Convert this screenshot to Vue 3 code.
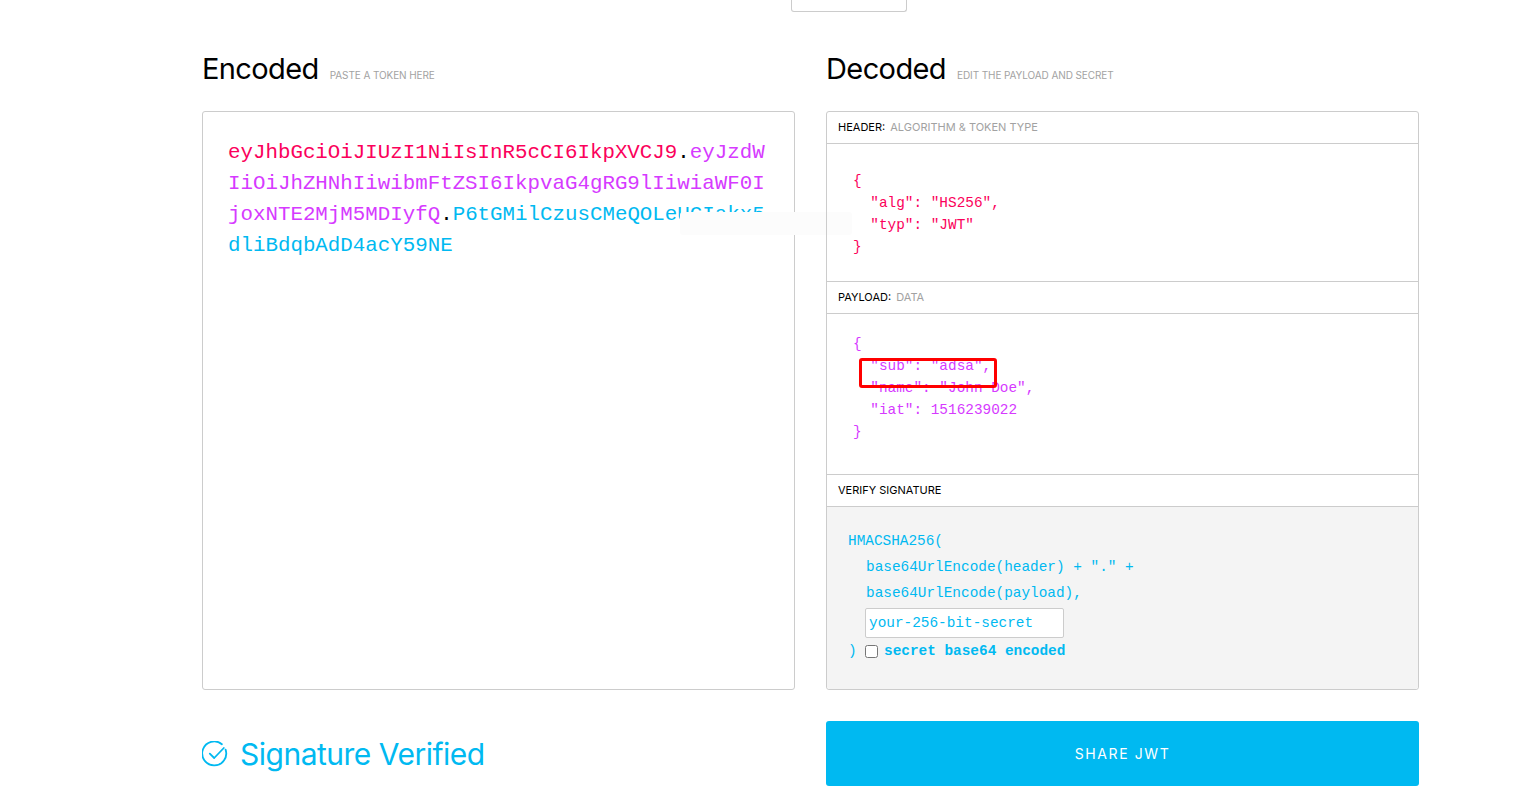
<script setup>
const headerLines = ['{', '  "alg": "HS256",', '  "typ": "JWT"', '}']
const payloadLines = ['{', '  "sub": "adsa",', '  "name": "John Doe",', '  "iat": 1516239022', '}']
</script>

<template>
  <div class="page">
    <div class="stub"></div>
    <main class="grid">
      <div class="title-row">
        <h2>Encoded</h2>
        <span>PASTE A TOKEN HERE</span>
      </div>
      <div class="title-row">
        <h2>Decoded</h2>
        <span>EDIT THE PAYLOAD AND SECRET</span>
      </div>

      <section class="panel encoded">
        <span class="red">eyJhbGciOiJIUzI1NiIsInR5cCI6IkpXVCJ9</span><span class="dot">.</span><span class="purple">eyJzdWIiOiJhZHNhIiwibmFtZSI6IkpvaG4gRG9lIiwiaWF0IjoxNTE2MjM5MDIyfQ</span><span class="dot">.</span><span class="blue">P6tGMilCzusCMeQOLeUCIakx5dliBdqbAdD4acY59NE</span>
        <div class="tip"></div>
      </section>

      <section class="panel decoded">
        <div class="head"><b>HEADER:</b> <i>ALGORITHM &amp; TOKEN TYPE</i></div>
        <pre class="code code-header red">{{ headerLines.join('\n') }}</pre>
        <div class="head ruled"><b>PAYLOAD:</b> <i>DATA</i></div>
        <div class="payload-wrap">
          <pre class="code code-payload purple">{{ payloadLines.join('\n') }}</pre>
          <div class="mark"></div>
        </div>
        <div class="head ruled"><b>VERIFY SIGNATURE</b></div>
        <div class="verify blue">
          <div class="v-first">HMACSHA256(</div>
          <div class="v-line">base64UrlEncode(header) + "." +</div>
          <div class="v-line">base64UrlEncode(payload),</div>
          <div class="v-input"><input value="your-256-bit-secret" /></div>
          <div class="v-last">
            <span>)</span>
            <input type="checkbox" />
            <strong>secret base64 encoded</strong>
          </div>
        </div>
      </section>

      <div class="verified">
        <svg width="26" height="26" viewBox="0 0 26 26" fill="none" stroke="currentColor" stroke-width="1.8" stroke-linecap="round" stroke-linejoin="round">
          <path d="M23.6 8.6A12 12 0 1 1 19.9 3.2" />
          <path d="M7.8 12.6l4.4 4.4 9.6-10" />
        </svg>
        <span>Signature Verified</span>
      </div>
      <button class="share">SHARE JWT</button>
    </main>
  </div>
</template>

<style>
html, body { margin: 0; background: #fff; overflow: hidden; }
</style>

<style scoped>
.page {
  height: 811px;
  overflow: hidden;
  font-family: Inter, "Liberation Sans", sans-serif;
  background: #fff;
}
.stub {
  width: 114px;
  height: 11px;
  margin-left: 791px;
  border: 1px solid #ccc;
  border-top: 0;
  border-radius: 0 0 3px 3px;
}
.grid {
  display: grid;
  grid-template-columns: 593px 593px;
  grid-template-rows: 99px 579px 96px;
  column-gap: 31px;
  margin-left: 202px;
}
.title-row {
  display: flex;
  align-items: baseline;
  gap: 11px;
  padding-top: 38px;
}
.title-row h2 {
  margin: 0;
  font-size: 29px;
  line-height: 38px;
  font-weight: 400;
  letter-spacing: -0.6px;
  color: #000;
}
.title-row span {
  font-size: 10px;
  color: #a2a2a2;
  letter-spacing: -0.1px;
}
.panel {
  box-sizing: border-box;
  border: 1px solid #ccc;
  border-radius: 3px;
  position: relative;
}
.encoded {
  padding: 25px 25px;
  font-family: "Liberation Mono", monospace;
  font-size: 20.8px;
  line-height: 31px;
  word-break: break-all;
}
.red { color: #fb015b; }
.purple { color: #d63aff; }
.blue { color: #00b9f1; }
.dot { color: #000; }
.tip {
  position: absolute;
  left: 477px;
  top: 100px;
  width: 172px;
  height: 23px;
  background: #fcfcfc;
  border-radius: 3px;
}
.decoded {
  display: flex;
  flex-direction: column;
}
.head {
  box-sizing: border-box;
  height: 32px;
  line-height: 31px;
  padding-left: 11px;
  font-size: 11px;
  border-bottom: 1px solid #ccc;
  flex: none;
}
.head.ruled {
  height: 33px;
  border-top: 1px solid #ccc;
}
.head b { font-weight: 400; color: #000; margin-right: 2px; }
.head i { font-style: normal; color: #a2a2a2; }
.code {
  margin: 0;
  font-family: "Liberation Mono", monospace;
  font-size: 14.4px;
  line-height: 22px;
  padding-left: 26px;
}
.code-header { height: 137px; padding-top: 26px; box-sizing: border-box; }
.payload-wrap { position: relative; height: 160px; flex: none; }
.code-payload { padding-top: 19px; }
.mark {
  position: absolute;
  left: 32px;
  top: 44px;
  width: 132px;
  height: 24px;
  border: 3px solid #f00;
  border-radius: 3px;
}
.verify {
  flex: 1;
  background: #f4f4f4;
  border-radius: 0 0 3px 3px;
  padding: 21px 0 0 21px;
  font-family: "Liberation Mono", monospace;
  font-size: 14.4px;
  line-height: 26px;
}
.v-line { padding-left: 18px; }
.v-input { padding-left: 17px; height: 30px; margin-top: 2px; }
.v-input input {
  box-sizing: border-box;
  display: block;
  width: 199px;
  height: 30px;
  padding: 0 3px;
  border: 1px solid #ccc;
  border-radius: 2px;
  background: #fff;
  font: inherit;
  color: #00b9f1;
  outline: none;
}
.v-last {
  display: flex;
  align-items: center;
  height: 26px;
}
.v-last input {
  width: 13px;
  height: 13px;
  margin: 0 6px 0 8px;
}
.v-last span { width: 9px; }
.v-last strong { font-weight: 700; }
.verified {
  display: flex;
  align-items: center;
  gap: 12px;
  padding-top: 31px;
  height: 65px;
  color: #00b9f1;
  font-size: 30px;
  letter-spacing: -0.5px;
  font-weight: 400;
}
.share {
  margin-top: 31px;
  height: 65px;
  border: 0;
  border-radius: 3px;
  background: #00b9f1;
  color: #fff;
  font-family: inherit;
  font-size: 14px;
  letter-spacing: 1.6px;
}
</style>
